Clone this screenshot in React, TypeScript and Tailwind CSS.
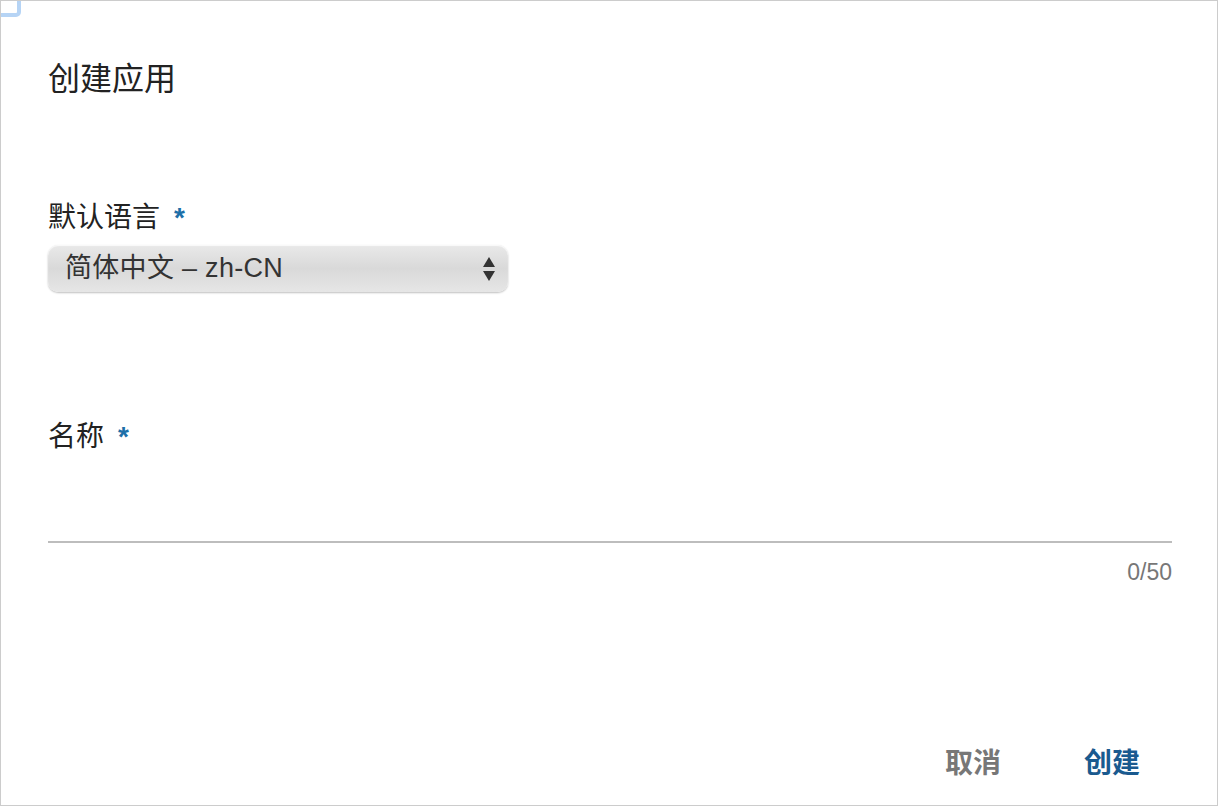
import React, { useState } from 'react'

const font = { fontFamily: '"Helvetica Neue", "Liberation Sans", "Noto Sans CJK SC", sans-serif' }

export default function App() {
  const [name, setName] = useState('')

  return (
    <div style={font} className="relative w-[1218px] h-[806px] bg-white border border-[#cccccc] text-[#222222] overflow-hidden">
      {/* focus ring fragment */}
      <div className="absolute -left-[10px] -top-[10px] w-[30px] h-[26px] rounded-[5px] border-[4px] border-[#b6d4f5]" />

      <div className="flex flex-col h-full pl-[47px] pr-[45px]">
        <h1 className="mt-[59px] text-[32px] leading-[38px] font-normal">创建应用</h1>

        <div className="mt-[103px] flex items-center text-[28px] leading-[34px]">
          <span>默认语言</span>
          <span className="ml-[14px] text-[#1d6fa8] font-bold">*</span>
        </div>
        <div className="mt-[10px] relative w-[460px] h-[47px] rounded-[10px] bg-gradient-to-b from-[#e9e9e9] via-[#d9d9d9] to-[#e6e6e6] shadow-[0_1px_2px_rgba(0,0,0,0.25),inset_0_1px_1px_rgba(255,255,255,0.8)]">
          <div className="h-full flex items-center pl-[17px] text-[27px] tracking-[0.3px] text-[#333333]">简体中文 – zh-CN</div>
          <svg className="absolute right-[12px] top-[11px]" width="14" height="26" viewBox="0 0 14 26">
            <path d="M7 1 L13 11 L1 11 Z" fill="#333333" />
            <path d="M1 15 L13 15 L7 25 Z" fill="#333333" />
          </svg>
        </div>

        <div className="mt-[128px] flex items-center text-[28px] leading-[34px]">
          <span>名称</span>
          <span className="ml-[14px] text-[#1d6fa8] font-bold">*</span>
        </div>
        <input
          value={name}
          onChange={e => setName(e.target.value)}
          className="mt-[53px] w-full h-[36px] bg-transparent border-b-2 border-[#bdbdbd] outline-none text-[24px]"
        />
        <div className="mt-[12px] text-right text-[23px] text-[#777777]">{name.length}/50</div>

        <div className="mt-auto mb-[20px] flex justify-end items-center gap-[83px] pr-[32px] text-[28px] font-bold">
          <button className="text-[#777777]">取消</button>
          <button className="text-[#1a5a8f]">创建</button>
        </div>
      </div>
    </div>
  )
}
